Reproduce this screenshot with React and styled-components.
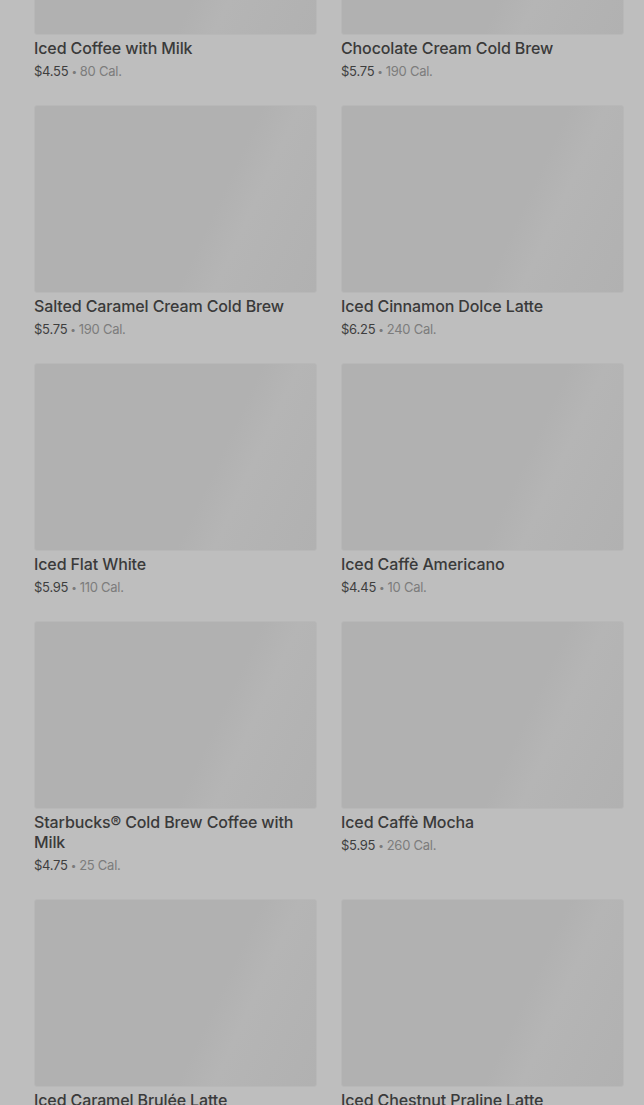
import React from 'react'
import styled, { createGlobalStyle } from 'styled-components'

const drinks = [
  { name: 'Iced Coffee with Milk', price: '$4.55', cal: '80 Cal.' },
  { name: 'Chocolate Cream Cold Brew', price: '$5.75', cal: '190 Cal.' },
  { name: 'Salted Caramel Cream Cold Brew', price: '$5.75', cal: '190 Cal.' },
  { name: 'Iced Cinnamon Dolce Latte', price: '$6.25', cal: '240 Cal.' },
  { name: 'Iced Flat White', price: '$5.95', cal: '110 Cal.' },
  { name: 'Iced Caffè Americano', price: '$4.45', cal: '10 Cal.' },
  { name: 'Starbucks® Cold Brew Coffee with Milk', price: '$4.75', cal: '25 Cal.' },
  { name: 'Iced Caffè Mocha', price: '$5.95', cal: '260 Cal.' },
  { name: 'Iced Caramel Brulée Latte', price: '$5.95', cal: '300 Cal.' },
  { name: 'Iced Chestnut Praline Latte', price: '$5.95', cal: '230 Cal.' },
]

function App() {
  return (
    <Page>
      <GlobalStyle />
      <Grid>
        {drinks.map((d) => (
          <Card key={d.name}>
            <Thumb />
            <Title>{d.name}</Title>
            <Meta>
              <Price>{d.price}</Price>
              <Dot>•</Dot>
              <Cal>{d.cal}</Cal>
            </Meta>
          </Card>
        ))}
      </Grid>
    </Page>
  )
}

export default App

const GlobalStyle = createGlobalStyle`
  html, body {
    margin: 0;
    background: #bebebe;
    overflow: hidden;
  }
  * { box-sizing: border-box; }
`

const Page = styled.div`
  height: 1105px;
  overflow: hidden;
  background: #bebebe;
  font-family: Inter, "Noto Sans", sans-serif;
`

const Grid = styled.div`
  display: grid;
  grid-template-columns: 1fr 1fr;
  column-gap: 24px;
  row-gap: 25px;
  padding: 0 20px 0 34px;
  margin-top: -153px;
  align-items: start;
`

const Card = styled.div`
  display: flex;
  flex-direction: column;
`

const Thumb = styled.div`
  height: 188px;
  border-radius: 3px;
  border: 1px solid #b8b8b8;
  background: linear-gradient(
    115deg,
    #b1b1b1 0%,
    #b1b1b1 62%,
    #b5b5b5 72%,
    #b3b3b3 85%,
    #b1b1b1 100%
  );
`

const Title = styled.div`
  margin-top: 3px;
  font-size: 16px;
  line-height: 20px;
  font-weight: 500;
  color: #3a3a3a;
  letter-spacing: -0.12px;
`

const Meta = styled.div`
  margin-top: 4px;
  font-size: 13px;
  line-height: 18px;
  display: flex;
  align-items: center;
  gap: 3px;
  letter-spacing: -0.25px;
`

const Price = styled.span`
  color: #3e3e3e;
`

const Dot = styled.span`
  color: #7a7a7a;
  font-size: 10px;
`

const Cal = styled.span`
  color: #7c7c7c;
`
